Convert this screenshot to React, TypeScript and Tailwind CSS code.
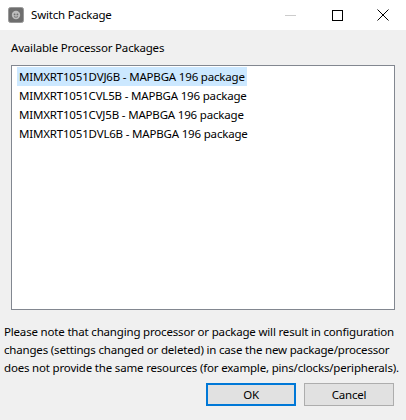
import React from "react";

const PACKAGES = [
  "MIMXRT1051DVJ6B - MAPBGA 196 package",
  "MIMXRT1051CVL5B - MAPBGA 196 package",
  "MIMXRT1051CVJ5B - MAPBGA 196 package",
  "MIMXRT1051DVL6B - MAPBGA 196 package",
];

const NOTE = [
  "Please note that changing processor or package will result in configuration",
  "changes (settings changed or deleted) in case the new package/processor",
  "does not provide the same resources (for example, pins/clocks/peripherals).",
];

function AppIcon() {
  return (
    <svg width="16" height="16" viewBox="0 0 16 16">
      <rect x="0.5" y="0.5" width="15" height="15" rx="2" fill="#6e6e6e" stroke="#9a9a9a" />
      <circle cx="8" cy="8" r="4.2" fill="#bdbdbd" />
      <circle cx="6.6" cy="7.4" r="0.9" fill="#6e6e6e" />
      <circle cx="9.4" cy="7.4" r="0.9" fill="#6e6e6e" />
      <path d="M6 9.6 Q8 11 10 9.6" stroke="#6e6e6e" strokeWidth="0.9" fill="none" />
    </svg>
  );
}

function WindowControls() {
  return (
    <div className="flex items-start h-full">
      {/* minimize (disabled look) */}
      <div className="w-[46px] h-full flex items-center justify-center">
        <svg width="12" height="12" viewBox="0 0 12 12">
          <line x1="0" y1="6.5" x2="11" y2="6.5" stroke="#cccccc" strokeWidth="1" />
        </svg>
      </div>
      <div className="w-[46px] h-full flex items-center justify-center">
        <svg width="11" height="11" viewBox="0 0 11 11">
          <rect x="0.5" y="0.5" width="10" height="10" fill="none" stroke="#000" strokeWidth="1" />
        </svg>
      </div>
      <div className="w-[46px] h-full flex items-center justify-center">
        <svg width="12" height="12" viewBox="0 0 12 12">
          <path d="M0.5 0.5 L11.5 11.5 M11.5 0.5 L0.5 11.5" stroke="#000" strokeWidth="1" />
        </svg>
      </div>
    </div>
  );
}

export default function App() {
  return (
    <div
      className="w-[406px] h-[420px] bg-[#f0f0f0] flex flex-col text-[11.5px] tracking-[-0.18px] text-black"
      style={{ fontFamily: '"Segoe UI", "Noto Sans", sans-serif' }}
    >
      {/* title bar */}
      <div className="h-[30px] bg-white flex items-center justify-between">
        <div className="flex items-center pl-[8px] gap-[7px]">
          <AppIcon />
          <span className="leading-[16px]">Switch Package</span>
        </div>
        <WindowControls />
      </div>

      <div className="pt-[10px] pl-[11px] leading-[16px]">Available Processor Packages</div>

      {/* package list */}
      <div className="mt-[9px] mx-[11px] h-[245px] bg-white border border-[#828790] pt-[1px] pl-[5px] flex flex-col items-start">
        {PACKAGES.map((p, i) => (
          <div
            key={p}
            className={
              "h-[19px] leading-[19px] px-[2px] whitespace-nowrap " + (i === 0 ? "bg-[#cce8ff]" : "")
            }
          >
            {p}
          </div>
        ))}
      </div>

      <div className="mt-[13px] pl-[4px] leading-[18px] whitespace-nowrap">
        {NOTE.map((line) => (
          <div key={line}>{line}</div>
        ))}
      </div>

      <div className="mt-[6px] flex justify-end gap-[8px] pr-[12px]">
        <button className="w-[90px] h-[23px] bg-[#e1e1e1] border-2 border-[#0078d7] leading-[19px]">OK</button>
        <button className="w-[90px] h-[23px] bg-[#e1e1e1] border border-[#adadad] leading-[21px]">Cancel</button>
      </div>
    </div>
  );
}
